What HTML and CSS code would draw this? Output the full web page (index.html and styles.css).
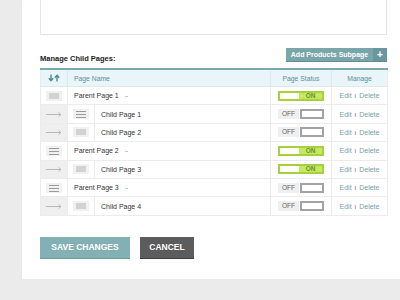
FILE: index.html
```html
<!DOCTYPE html>
<html lang="en">
<head>
<meta charset="UTF-8">
<title>Manage Child Pages</title>
<link rel="stylesheet" href="styles.css">
</head>
<body>
<div class="panel">
    <div class="textbox"></div>

    <div class="section-head">
        <h3>Manage Child Pages:</h3>
        <button class="add-btn"><span class="add-label">Add Products Subpage</span><span class="add-plus">+</span></button>
    </div>

    <table class="pages">
        <colgroup>
            <col style="width: 27px">
            <col style="width: 27px">
            <col style="width: 176px">
            <col style="width: 61px">
            <col style="width: 56px">
        </colgroup>
        <thead>
            <tr>
                <th class="sort">
                    <svg width="12" height="8" viewBox="0 0 12 8">
                        <path d="M3 0.5v6M0.8 4.3L3 6.8 5.2 4.3" fill="none" stroke="#4f8c95" stroke-width="1.4"/>
                        <path d="M9 7.5v-6M6.8 3.7L9 1.2 11.2 3.7" fill="none" stroke="#4f8c95" stroke-width="1.4"/>
                    </svg>
                </th>
                <th class="name" colspan="2">Page Name</th>
                <th class="center">Page Status</th>
                <th class="center">Manage</th>
            </tr>
        </thead>
        <tbody>
            <tr class="parent">
                <td class="handle"><span class="ico ico-block"></span></td>
                <td class="name" colspan="2">Parent Page 1 <span class="dash"></span></td>
                <td class="center"><span class="toggle on"><span class="knob"></span><span class="lbl">ON</span></span></td>
                <td class="center manage">Edit <span class="sep">I</span> Delete</td>
            </tr>
            <tr class="child">
                <td class="handle"><svg class="arrow" width="16" height="5" viewBox="0 0 16 5"><path d="M0 2.5h15M12.5 0.5L15 2.5 12.5 4.5" fill="none" stroke="#b9b9b9" stroke-width="1"/></svg></td>
                <td class="sub"><span class="ico ico-lines"></span></td>
                <td class="name">Child Page 1</td>
                <td class="center"><span class="toggle off"><span class="lbl">OFF</span><span class="knob"></span></span></td>
                <td class="center manage">Edit <span class="sep">I</span> Delete</td>
            </tr>
            <tr class="child">
                <td class="handle"><svg class="arrow" width="16" height="5" viewBox="0 0 16 5"><path d="M0 2.5h15M12.5 0.5L15 2.5 12.5 4.5" fill="none" stroke="#b9b9b9" stroke-width="1"/></svg></td>
                <td class="sub"><span class="ico ico-block"></span></td>
                <td class="name">Child Page 2</td>
                <td class="center"><span class="toggle off"><span class="lbl">OFF</span><span class="knob"></span></span></td>
                <td class="center manage">Edit <span class="sep">I</span> Delete</td>
            </tr>
            <tr class="parent">
                <td class="handle"><span class="ico ico-lines"></span></td>
                <td class="name" colspan="2">Parent Page 2 <span class="dash"></span></td>
                <td class="center"><span class="toggle on"><span class="knob"></span><span class="lbl">ON</span></span></td>
                <td class="center manage">Edit <span class="sep">I</span> Delete</td>
            </tr>
            <tr class="child">
                <td class="handle"><svg class="arrow" width="16" height="5" viewBox="0 0 16 5"><path d="M0 2.5h15M12.5 0.5L15 2.5 12.5 4.5" fill="none" stroke="#b9b9b9" stroke-width="1"/></svg></td>
                <td class="sub"><span class="ico ico-block"></span></td>
                <td class="name">Child Page 3</td>
                <td class="center"><span class="toggle on"><span class="knob"></span><span class="lbl">ON</span></span></td>
                <td class="center manage">Edit <span class="sep">I</span> Delete</td>
            </tr>
            <tr class="parent">
                <td class="handle"><span class="ico ico-lines"></span></td>
                <td class="name" colspan="2">Parent Page 3 <span class="dash"></span></td>
                <td class="center"><span class="toggle off"><span class="lbl">OFF</span><span class="knob"></span></span></td>
                <td class="center manage">Edit <span class="sep">I</span> Delete</td>
            </tr>
            <tr class="child">
                <td class="handle"><svg class="arrow" width="16" height="5" viewBox="0 0 16 5"><path d="M0 2.5h15M12.5 0.5L15 2.5 12.5 4.5" fill="none" stroke="#b9b9b9" stroke-width="1"/></svg></td>
                <td class="sub"><span class="ico ico-block"></span></td>
                <td class="name">Child Page 4</td>
                <td class="center"><span class="toggle off"><span class="lbl">OFF</span><span class="knob"></span></span></td>
                <td class="center manage">Edit <span class="sep">I</span> Delete</td>
            </tr>
        </tbody>
    </table>

    <div class="actions">
        <button class="btn save">SAVE CHANGES</button>
        <button class="btn cancel">CANCEL</button>
    </div>
</div>
</body>
</html>
```

FILE: styles.css
```css
body {
    margin: 0;
    background-color: #ebebeb;
    font-family: "Liberation Sans", Arial, sans-serif;
    color: #333;
}
.panel {
    margin-left: 22px;
    height: 279px;
    background-color: #fff;
    box-shadow: 0 1px 1px rgba(0, 0, 0, 0.12);
    padding: 0 0 0 18px;
    box-sizing: border-box;
}
.textbox {
    width: 347px;
    height: 35px;
    border: 1px solid #e4e4e4;
    border-top: none;
    box-sizing: border-box;
}
.section-head {
    width: 347px;
    margin-top: 13px;
    display: flex;
    justify-content: space-between;
    align-items: flex-end;
}
.section-head h3 {
    margin: 0 0 -1px 0;
    font-size: 7.5px;
    font-weight: bold;
    color: #222;
}
.add-btn {
    display: flex;
    height: 14px;
    padding: 0;
    border: none;
    border-bottom: 1px solid #628f95;
    background-color: #79a5ab;
    color: #fff;
    font-family: inherit;
    font-size: 7px;
    font-weight: bold;
    cursor: pointer;
}
.add-label {
    width: 87px;
    line-height: 13px;
    text-align: center;
}
.add-plus {
    width: 14px;
    line-height: 13px;
    background-color: #6a979d;
    font-size: 10px;
}
.pages {
    margin-top: 6px;
    width: 347px;
    border-collapse: collapse;
    table-layout: fixed;
    border-top: 2px solid #7aa9ae;
    font-size: 7px;
}
.pages th {
    height: 16px;
    padding: 0;
    background-color: #e9f5f8;
    color: #5b8f96;
    font-weight: normal;
    font-size: 6.8px;
    border-left: 1px solid #d9e9ed;
    border-bottom: 1px solid #d9e9ed;
}
.pages th:first-child {
    border-left: 1px solid #e4eef0;
}
.pages th.sort svg {
    display: block;
    margin: 0 auto;
}
.pages td {
    height: 17.4px;
    padding: 0;
    border-bottom: 1px solid #ececec;
    border-left: 1px solid #ececec;
}
.pages td:last-child,
.pages th:last-child {
    border-right: 1px solid #ececec;
}
.pages .name {
    text-align: left;
    padding-left: 6px;
}
.pages .center {
    text-align: center;
}
.handle {
    text-align: center;
}
.child .handle {
    background-color: #efefef;
}
.handle .arrow {
    display: block;
    margin: 0 auto;
}
.sub {
    text-align: center;
}
.ico {
    display: block;
    margin: 0 auto;
    width: 16px;
    height: 10px;
    background-color: #f1f1f1;
    position: relative;
}
.ico-block::after {
    content: "";
    position: absolute;
    left: 3px;
    top: 2px;
    width: 10px;
    height: 6px;
    background-color: #d2d2d2;
}
.ico-lines::after {
    content: "";
    position: absolute;
    left: 3px;
    top: 2px;
    width: 10px;
    height: 5px;
    border-top: 1px solid #9a9a9a;
    border-bottom: 1px solid #9a9a9a;
    background: linear-gradient(#9a9a9a, #9a9a9a) 0 2px / 10px 1px no-repeat;
}
.dash {
    display: inline-block;
    width: 3px;
    height: 1px;
    margin-left: 4px;
    vertical-align: middle;
    background-color: #a9d6e5;
}
.toggle {
    display: inline-flex;
    width: 46px;
    height: 10px;
    box-sizing: border-box;
    vertical-align: middle;
    font-size: 6.5px;
    line-height: 10px;
}
.toggle.on {
    background-color: #c4e961;
    border: 2px solid #a7d03f;
    line-height: 6px;
}
.toggle.on .knob {
    width: 19px;
    background-color: #fff;
}
.toggle.on .lbl {
    flex: 1;
    color: #6d8f30;
    font-weight: bold;
}
.toggle.off .lbl {
    width: 21px;
    background-color: #efefef;
    color: #666;
}
.toggle.off .knob {
    flex: 1;
    margin-left: 1px;
    background-color: #fff;
    border: 2px solid #a3a3a3;
}
.manage {
    color: #78a2a7;
    font-size: 7px;
}
.manage .sep {
    color: #666;
    font-size: 6px;
    margin: 0 1px;
}
.actions {
    margin-top: 21px;
    display: flex;
    gap: 10px;
}
.btn {
    height: 22px;
    border: none;
    color: #fff;
    font-family: "Liberation Sans", Arial, sans-serif;
    font-size: 8.5px;
    font-weight: bold;
    padding: 0;
    cursor: pointer;
}
.btn.save {
    width: 90px;
    background-color: #82b0b5;
    border-bottom: 1px solid #6d9ca1;
}
.btn.cancel {
    width: 54px;
    background-color: #5c5c5c;
    border-bottom: 1px solid #3e3e3e;
}
```
